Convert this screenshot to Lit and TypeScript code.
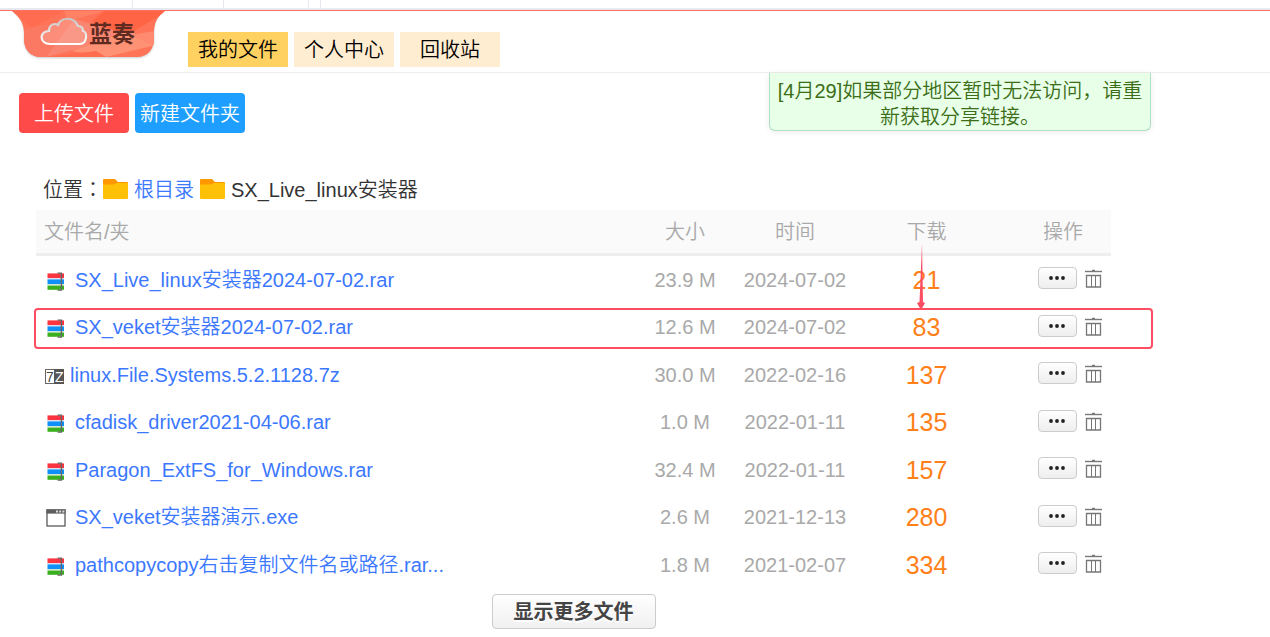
import { LitElement, html, css, svg } from "lit";
import { customElement, property } from "lit/decorators.js";

type Kind = "rar" | "7z" | "exe";

interface FileRow {
  kind: Kind;
  name: string;
  size: string;
  date: string;
  downloads: number;
}

const FILES: FileRow[] = [
  { kind: "rar", name: "SX_Live_linux安装器2024-07-02.rar", size: "23.9 M", date: "2024-07-02", downloads: 21 },
  { kind: "rar", name: "SX_veket安装器2024-07-02.rar", size: "12.6 M", date: "2024-07-02", downloads: 83 },
  { kind: "7z", name: "linux.File.Systems.5.2.1128.7z", size: "30.0 M", date: "2022-02-16", downloads: 137 },
  { kind: "rar", name: "cfadisk_driver2021-04-06.rar", size: "1.0 M", date: "2022-01-11", downloads: 135 },
  { kind: "rar", name: "Paragon_ExtFS_for_Windows.rar", size: "32.4 M", date: "2022-01-11", downloads: 157 },
  { kind: "exe", name: "SX_veket安装器演示.exe", size: "2.6 M", date: "2021-12-13", downloads: 280 },
  { kind: "rar", name: "pathcopycopy右击复制文件名或路径.rar...", size: "1.8 M", date: "2021-02-07", downloads: 334 },
];

@customElement("file-icon")
class FileIcon extends LitElement {
  @property() kind: Kind = "rar";

  static styles = css`
    :host { display: block; flex: none; }
    .icon { display: block; }
    .mark { font: 400 14px "Liberation Sans", sans-serif; }
  `;

  render() {
    if (this.kind === "7z") {
      return html`<svg class="icon" width="26" height="24" viewBox="0 0 26 24" aria-hidden="true">
        <rect x="1.5" y="6.5" width="18" height="14" fill="#fff" stroke="#666" />
        <rect x="10" y="6" width="10" height="15" fill="#555" />
        <text class="mark" x="2" y="19" fill="#444" font-style="italic">7</text>
        <text class="mark" x="11" y="19" fill="#fff">Z</text>
      </svg>`;
    }
    if (this.kind === "exe") {
      return html`<svg class="icon" width="31" height="24" viewBox="0 0 31 24" aria-hidden="true">
        <rect x="3" y="5" width="18" height="16" fill="#fff" stroke="#666" stroke-width="1.4" />
        <rect x="2.4" y="4.4" width="19.2" height="4.2" fill="#5e5e5e" />
        <path d="M12 6.5h2M15.2 6.5h2M18.4 6.5h2" stroke="#ddd" stroke-width="2" />
      </svg>`;
    }
    return html`<svg class="icon" width="31" height="24" viewBox="0 0 31 24" aria-hidden="true">
      <rect x="3.5" y="5.4" width="16.5" height="4.6" fill="#fa3440" />
      <rect x="3.5" y="10" width="16.5" height="1.4" fill="#dde" />
      <rect x="3.5" y="11.4" width="16.5" height="4.8" fill="#0f8ff8" />
      <rect x="3.5" y="16.2" width="16.5" height="1.4" fill="#cfe6cb" />
      <rect x="3.5" y="17.6" width="16.5" height="4.2" fill="#3bb01f" />
      <path d="M13.5 5.100h3.900v17h-3.900" fill="none" stroke="#666" stroke-width="1.4" />
    </svg>`;
  }
}

@customElement("app-root")
class AppRoot extends LitElement {
  static styles = css`
    :host {
      display: block;
      color: #333;
      background: #fff;
      font: 350 20px/26px "Liberation Sans", "Noto Sans CJK SC", sans-serif;
    }
    * { box-sizing: border-box; }
    a { color: #3c78ff; text-decoration: none; }
    button { font: inherit; cursor: pointer; }

    .tabstrip {
      display: flex;
      height: 10px;
      padding-left: 10px;
      border-bottom: 2px solid #e6e9f0;
    }
    .tab { width: 123px; border-right: 1px solid #e6e9f0; }
    .tab.b { width: 91px; }
    .tab.c { width: 85px; }
    .tab.d { width: 12px; }

    .header {
      display: flex;
      align-items: flex-start;
      height: 63px;
      border-top: 1px solid #ff6f60;
      border-bottom: 1px solid #eee;
      padding-left: 12px;
    }
    .logo { display: block; width: 156px; height: 52px; }
    .logo svg { display: block; }
    .brand { font: 700 23px "Noto Sans CJK SC", sans-serif; }
    .nav { display: flex; gap: 6px; margin: 21px 0 0 20px; }
    .nav a {
      width: 100px;
      height: 35px;
      line-height: 37px;
      text-align: center;
      color: #000;
      background: #ffedd1;
    }
    .nav a.current { background: #ffd161; }

    .toolbar {
      display: flex;
      justify-content: space-between;
      align-items: flex-start;
      padding: 0 119px 0 19px;
    }
    .actions { display: flex; gap: 6px; margin-top: 20px; }
    .actions button {
      width: 110px;
      height: 40px;
      padding: 1px 0 0;
      border: 0;
      border-radius: 4px;
      color: #fff;
      background: #ff4a4a;
    }
    .actions button.folder { background: #1e9fff; }
    .notice {
      width: 382px;
      margin: 0;
      padding: 5px 6px 0;
      border: 1px solid #addfc4;
      border-top: 0;
      border-radius: 0 0 6px 6px;
      background: #e8ffe8;
      box-shadow: 0 1px 6px rgba(0, 0, 0, 0.08);
      color: #3b6e16;
      text-align: center;
    }
    .colon { font-family: "Noto Sans CJK TC", sans-serif; line-height: 1; }

    .main { padding: 37px 159px 0 36px; }
    .path { display: flex; align-items: center; height: 40px; padding-left: 7px; }
    .path svg { margin: -2px 6px 0 0; }
    .path a { margin-right: 6px; }

    .listing { position: relative; }
    .files { width: 100%; table-layout: fixed; border-collapse: separate; border-spacing: 0; }
    .files th, .files td { padding: 0; text-align: center; font-weight: 350; color: #a9a9a9; }
    .files th { height: 46px; background: #fafafa; border-bottom: 3px solid #eee; }
    .files td { height: 48px; }
    .files tbody tr:nth-child(odd) td { height: 47px; }
    .files .name { text-align: left; padding-left: 8px; }
    .files .count { padding-right: 12px; }
    .files td.count { color: #ff8019; font-size: 25px; }
    .col-size, .col-date { width: 110px; }
    .col-count { width: 165px; }
    .col-ops { width: 96px; }
    .file { display: flex; align-items: center; white-space: nowrap; }
    .ops { display: flex; align-items: center; gap: 8px; padding: 0 0 3px 23px; }
    .ops button { display: flex; align-items: center; justify-content: center; padding: 0; }
    .more {
      width: 39px;
      height: 22px;
      border: 1px solid #ccc;
      border-radius: 4px;
      background: linear-gradient(#fff, #eee);
    }
    .trash { width: 17px; height: 20px; border: 0; background: none; }

    .highlight {
      position: absolute;
      top: 98px;
      left: -2px;
      right: -42px;
      height: 41px;
      border: 2px solid #ff4d62;
      border-radius: 4px;
      pointer-events: none;
    }
    .arrow { position: absolute; top: 34px; right: 184px; pointer-events: none; }

    .footer { display: flex; justify-content: center; padding-top: 6px; }
    .show-more {
      width: 164px;
      height: 35px;
      padding: 0;
      border: 1px solid #ccc;
      border-radius: 4px;
      background: linear-gradient(#fff, #f0f0f0);
      color: #444;
      font-weight: 700;
      text-shadow: 0 2px 1px #fff;
    }
  `;

  private folder() {
    return html`<svg width="25" height="20" viewBox="0 0 25 20" aria-hidden="true">
      <path d="M1 0h11l3 3h9q1 0 1 1v6H0V1q0-1 1-1z" fill="#ff9800" />
      <path d="M0 5.5h11L14 4h10q1 0 1 1v14q0 1-1 1H1q-1 0-1-1z" fill="#ffc107" />
    </svg>`;
  }

  private logo() {
    return html`<svg width="156" height="52" viewBox="0 0 156 52" role="img" aria-label="蓝奏">
      <defs>
        <clipPath id="shield">
          <path d="M0 0H153C146 5 142 11 142 22V28C142 38 136 46 125 46H29C18 46 12 38 12 28V22C12 11 6 5 0 0z" />
        </clipPath>
        <filter id="soft" x="-10%" y="-10%" width="120%" height="130%"><feGaussianBlur stdDeviation="1.3" /></filter>
        <linearGradient id="rim" x1="0" y1="0" x2="0" y2="1">
          <stop offset="0" stop-color="#c9c4c4" /><stop offset="1" stop-color="#fff" />
        </linearGradient>
      </defs>
      <path d="M2 1H151C144 6 142 12 142 23V29C142 39 136 47 125 47H29C18 47 12 39 12 29V23C12 12 8 6 2 1z" fill="#999" opacity=".5" filter="url(#soft)" />
      <g clip-path="url(#shield)">
        ${svg`
          <rect width="156" height="48" fill="#ff7458" />
          <path d="M0 0H52L20 17z" fill="#ff6c50" />
          <path d="M52 0H92L56 10z" fill="#ff8265" />
          <path d="M92 0H156L108 28 80 10z" fill="#ff6544" />
          <path d="M12 18L62 8 34 46H12z" fill="#fb7963" />
          <path d="M62 8L118 24 34 46z" fill="#f98672" />
          <path d="M118 20L144 34 94 46 60 40z" fill="#ff9275" />
          <path d="M84 40L94 46H34z" fill="#ff6c50" />
          <path d="M142 20L118 24 144 36z" fill="#ff8a70" />
        `}
      </g>
      <path d="M38 33C27 33 27 20 37 20C37 13 43 12 46 14C49 6 62 5 66 15C70 15 71 18 71 20C76 21 75 33 68 33z" fill="#fff" fill-opacity=".15" stroke="url(#rim)" stroke-width="2.200" />
      <text class="brand" x="77" y="31" fill="#5f2a20">蓝奏</text>
    </svg>`;
  }

  private row(f: FileRow) {
    return html`<tr>
      <td class="name"><a class="file" href="#"><file-icon .kind=${f.kind}></file-icon>${f.name}</a></td>
      <td>${f.size}</td>
      <td>${f.date}</td>
      <td class="count">${f.downloads}</td>
      <td>
        <div class="ops">
          <button class="more" aria-label="更多">
            <svg width="18" height="6" viewBox="0 0 18 6"><g fill="#222"><circle cx="2" cy="3" r="1.900" /><circle cx="8" cy="3" r="1.900" /><circle cx="14" cy="3" r="1.900" /></g></svg>
          </button>
          <button class="trash" aria-label="删除">
            <svg width="17" height="20" viewBox="0 0 17 20" fill="none" stroke="#777">
              <path d="M0 3.500H17" stroke-width="1.400" />
              <path d="M7 2.500h3" stroke-width="1.400" />
              <path d="M1.500 7.500h14v11.500h-14z" stroke-width="1.300" />
              <path d="M6.500 8v11M10.500 8v11" />
            </svg>
          </button>
        </div>
      </td>
    </tr>`;
  }

  render() {
    return html`
      <div class="tabstrip">
        <div class="tab"></div><div class="tab b"></div><div class="tab c"></div><div class="tab d"></div>
      </div>
      <header class="header">
        <a class="logo" href="#">${this.logo()}</a>
        <nav class="nav">
          <a class="current" href="#">我的文件</a>
          <a href="#">个人中心</a>
          <a href="#">回收站</a>
        </nav>
      </header>
      <div class="toolbar">
        <div class="actions">
          <button>上传文件</button>
          <button class="folder">新建文件夹</button>
        </div>
        <p class="notice">[4月29]如果部分地区暂时无法访问，请重新获取分享链接。</p>
      </div>
      <main class="main">
        <div class="path">
          <span>位置<span class="colon">：</span></span>${this.folder()}<a href="#">根目录</a>${this.folder()}<span>SX_Live_linux安装器</span>
        </div>
        <div class="listing">
          <table class="files">
            <colgroup>
              <col /><col class="col-size" /><col class="col-date" /><col class="col-count" /><col class="col-ops" />
            </colgroup>
            <thead>
              <tr><th class="name">文件名/夹</th><th>大小</th><th>时间</th><th class="count">下载</th><th>操作</th></tr>
            </thead>
            <tbody>${FILES.map((f) => this.row(f))}</tbody>
          </table>
          <div class="highlight"></div>
          <svg class="arrow" width="12" height="66" viewBox="0 0 12 66" aria-hidden="true">
            <path d="M7 0L8 58 10 59 6 66 2 59 4.500 58z" fill="#ff4d62" />
          </svg>
        </div>
        <div class="footer"><button class="show-more">显示更多文件</button></div>
      </main>
    `;
  }
}
